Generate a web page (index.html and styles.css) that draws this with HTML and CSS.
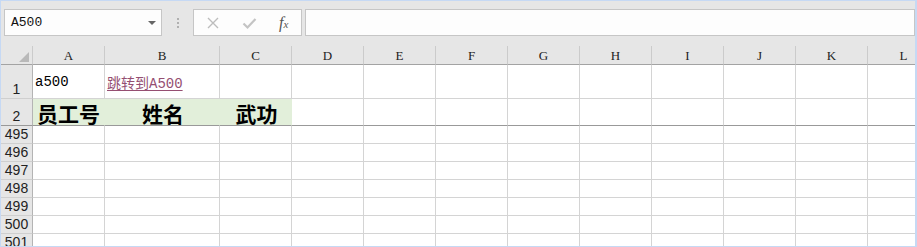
FILE: index.html
```html
<!DOCTYPE html>
<html lang="zh-CN">
<head>
  <meta charset="UTF-8" />
  <title>跳转到A500</title>
  <link rel="stylesheet" href="styles.css">
</head>
<body>

<div class="app">
  <div class="toolbar">
    <div class="name-box">
      <span>A500</span>
      <span class="caret"></span>
    </div>
    <div class="grip"><i></i><i></i><i></i></div>
    <div class="fx-box">
      <svg width="14" height="14" viewBox="0 0 14 14"><path d="M2 2 L12 12 M12 2 L2 12" stroke="#bdbdbd" stroke-width="1.4" fill="none"/></svg>
      <svg width="15" height="14" viewBox="0 0 15 14"><path d="M1.5 7.5 L5.5 11.5 L13.5 3" stroke="#c4c4c4" stroke-width="2.2" fill="none"/></svg>
      <span class="fx">f<sub>x</sub></span>
    </div>
    <div class="formula"></div>
  </div>

  <div class="sheet">
    <div class="row head">
      <div class="rh corner"><span class="tri"></span></div>
      <div class="ch">A</div><div class="ch">B</div><div class="ch">C</div>
      <div class="ch">D</div><div class="ch">E</div><div class="ch">F</div>
      <div class="ch">G</div><div class="ch">H</div><div class="ch">I</div>
      <div class="ch">J</div><div class="ch">K</div><div class="ch">L</div>
    </div>

    <div class="row r1">
      <div class="rh">1</div>
      <div class="c">a500</div>
      <div class="c"><a class="link" href="#A500">跳转到A500</a></div>
      <div class="c"></div><div class="c"></div><div class="c"></div><div class="c"></div>
      <div class="c"></div><div class="c"></div><div class="c"></div><div class="c"></div>
      <div class="c"></div><div class="c"></div>
    </div>

    <div class="row r2">
      <div class="rh">2</div>
      <div class="c title left">员工号</div>
      <div class="c title">姓名</div>
      <div class="c title">武功</div>
      <div class="c"></div><div class="c"></div><div class="c"></div><div class="c"></div>
      <div class="c"></div><div class="c"></div><div class="c"></div><div class="c"></div>
      <div class="c"></div>
    </div>

    <div id="rows"></div>
  </div>
</div>

<script>
  const rows = document.getElementById("rows");
  for (let n = 495; n <= 501; n++) {
    const r = document.createElement("div");
    r.className = "row";
    let html = `<div class="rh">${n}</div>`;
    for (let i = 0; i < 12; i++) html += `<div class="c"></div>`;
    r.innerHTML = html;
    rows.appendChild(r);
  }
</script>

</body>
</html>
```

FILE: styles.css
```css
body {
  margin: 0;
  background: #e6e6e6;
}
.app {
  width: 917px;
  height: 247px;
  box-sizing: border-box;
  border: 1px solid #c6d9f4;
  border-right-width: 2px;
  background: #e6e6e6;
  overflow: hidden;
}
.toolbar {
  display: flex;
  align-items: flex-start;
  height: 45px;
  box-sizing: border-box;
  padding: 8px 0 0 3px;
}
.name-box, .fx-box, .formula {
  height: 27px;
  box-sizing: border-box;
  border: 1px solid #c6c6c6;
  background: #fdfdfd;
}
.name-box {
  width: 158px;
  display: flex;
  align-items: center;
  justify-content: space-between;
  padding: 0 4px 0 6px;
  font-family: "Liberation Mono", monospace;
  font-size: 13px;
  color: #111;
}
.caret {
  width: 0;
  height: 0;
  border-left: 4px solid transparent;
  border-right: 4px solid transparent;
  border-top: 4px solid #666;
  margin-right: 1px;
}
.grip {
  width: 31px;
  height: 27px;
  display: flex;
  flex-direction: column;
  align-items: center;
  justify-content: center;
  gap: 2px;
}
.grip i {
  width: 2px;
  height: 2px;
  background: #b0b0b0;
}
.fx-box {
  width: 109px;
  display: flex;
  align-items: center;
  padding-left: 12px;
  gap: 22px;
}
.fx {
  font-family: "Liberation Serif", serif;
  font-style: italic;
  font-size: 16px;
  color: #555;
}
.fx sub {
  font-size: 11px;
  vertical-align: 0;
}
.formula {
  flex: 1;
  margin-left: 3px;
}

.sheet {
  background: #fff;
}
.row {
  display: grid;
  grid-template-columns: 32px 72px 115px 72px repeat(9, 72px);
  height: 18px;
}
.row > div {
  box-sizing: border-box;
  border-right: 1px solid #d4d4d4;
  border-bottom: 1px solid #d4d4d4;
}
.row.head {
  height: 19px;
  background: #e6e6e6;
}
.row.head > div {
  border-bottom-color: #a3a3a3;
  border-right-color: #cbcbcb;
}
.ch {
  display: flex;
  align-items: center;
  justify-content: center;
  font-family: "Liberation Serif", serif;
  font-size: 13px;
  color: #222;
  padding-top: 2px;
}
.rh {
  background: #e6e6e6;
  display: flex;
  align-items: flex-end;
  justify-content: center;
  font-family: "Liberation Sans", sans-serif;
  font-size: 14px;
  color: #222;
  line-height: 17px;
}
.row > .rh {
  border-right-color: #b4b4b4;
  border-bottom-color: #cfcfcf;
}
.row.head > .corner {
  position: relative;
  border-right-color: #cbcbcb;
}
.tri {
  position: absolute;
  right: 3px;
  bottom: 2px;
  width: 0;
  height: 0;
  border-left: 10px solid transparent;
  border-bottom: 10px solid #b9b9b9;
}
.r1 {
  height: 34px;
}
.c {
  display: flex;
  align-items: center;
  padding-left: 2px;
  font-family: "Liberation Mono", "Noto Sans CJK SC", monospace;
  font-size: 14px;
  color: #000;
}
.r1 > .c {
  padding-top: 1px;
}
.link {
  color: #954f72;
  text-decoration: underline;
  text-underline-offset: 2px;
}
.r2 {
  height: 27px;
}
.r2 > div {
  border-bottom: 1px solid #999;
}
.row.r2 > .rh {
  border-bottom-color: #999;
}
.title {
  background: #e2efda;
  justify-content: center;
  font-family: "Noto Sans CJK SC", sans-serif;
  font-weight: 700;
  font-size: 21px;
  line-height: 24px;
  padding-top: 2px;
}
.row > .title {
  border-right-color: #e2efda;
}
.title.left {
  justify-content: flex-start;
  padding-left: 4px;
}
```
